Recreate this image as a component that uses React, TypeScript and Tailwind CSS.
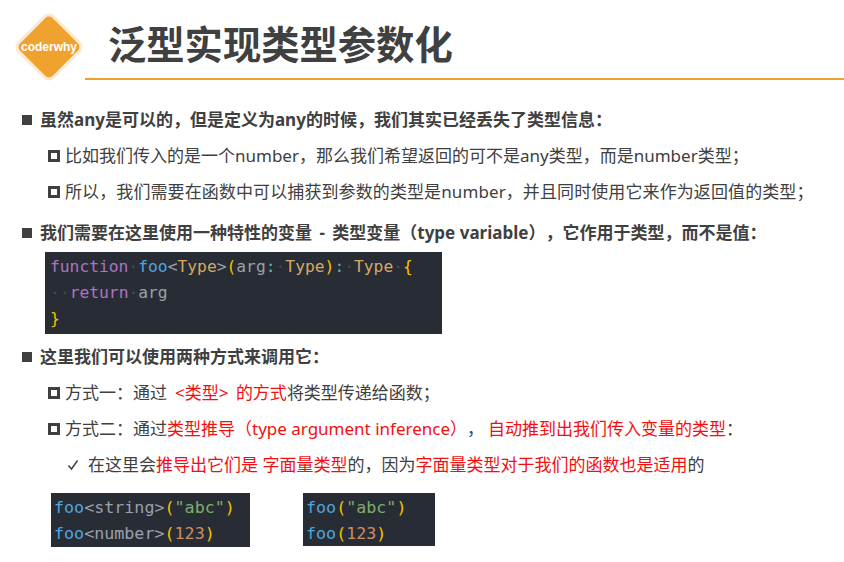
const cjk = 'font-["Noto_Sans","Noto_Sans_CJK_SC",sans-serif]';

function Red({ children }: { children: React.ReactNode }) {
  return <span className="text-[#f30f0f]">{children}</span>;
}

function Main({ children, className = '' }: { children: React.ReactNode; className?: string }) {
  return (
    <div className={`flex h-6 items-center text-[17px] font-bold ${className}`}>
      <span className="ml-[22px] mr-2 h-[10px] w-[10px] shrink-0 bg-[#404040]" />
      <span className="whitespace-pre [text-spacing-trim:space-all]">{children}</span>
    </div>
  );
}

function Sub({ children, className = '' }: { children: React.ReactNode; className?: string }) {
  return (
    <div className={`flex h-6 items-center text-[17px] ${className}`}>
      <span className="ml-[48px] mr-[5px] h-3 w-3 shrink-0 border-[3px] border-[#404040]" />
      <span className="whitespace-pre [text-spacing-trim:space-all]">{children}</span>
    </div>
  );
}

const Dot = () => <span className="text-[#454b57]">·</span>;

function CodeLine({ children }: { children: React.ReactNode }) {
  return <div className="h-[26px] whitespace-pre leading-[26px]">{children}</div>;
}

export default function App() {
  return (
    <div className={`h-[562px] w-[844px] overflow-hidden bg-white text-[#404040] ${cjk}`}>
      {/* header */}
      <div className="relative h-[110px]">
        <div className="absolute left-[15px] top-[13px] h-[68px] w-[68px]">
          <div className="absolute left-[8px] top-[8px] h-[52px] w-[52px] rotate-45 rounded-lg border-[3px] border-[#fbe9d2] bg-[#f0a22e]" />
          <div className='absolute inset-0 flex items-center justify-center font-["Liberation_Sans",sans-serif] text-[12px] font-bold text-white'>
            coderwhy
          </div>
        </div>
        <h1 className="absolute left-[108px] top-[15px] text-[38.3px] leading-[58px] font-bold text-[#404040]">
          泛型实现类型参数化
        </h1>
        <div className="absolute left-[85px] right-0 top-[78px] h-[2px] bg-[#f0a02e]" />
      </div>

      <Main className="mt-[-2px]">虽然any是可以的，但是定义为any的时候，我们其实已经丢失了类型信息：</Main>
      <Sub className="mt-3">比如我们传入的是一个number，那么我们希望返回的可不是any类型，而是number类型；</Sub>
      <Sub className="mt-3 tracking-[0.1px]">所以，我们需要在函数中可以捕获到参数的类型是number，并且同时使用它来作为返回值的类型；</Sub>
      <Main className="mt-[17px]">
        我们需要在这里使用一种特性的变量<span className="mx-[3px]"> - </span>类型变量（type variable），它作用于类型，而不是值：
      </Main>

      <div className='ml-[45px] mt-[7px] h-[82px] w-[397px] bg-[#282c34] px-[5px] py-[2px] font-["DejaVu_Sans_Mono",monospace] text-[16.3px] text-[#9aa0ad]'>
        <CodeLine>
          <span className="text-[#b072c4]">function</span><Dot />
          <span className="text-[#4fa5e0]">foo</span>&lt;<span className="text-[#d8a863]">Type</span>&gt;
          <span className="text-[#f2c400]">(</span>arg<span className="text-[#56b6c2]">:</span><Dot />
          <span className="text-[#d8a863]">Type</span><span className="text-[#f2c400]">)</span>
          <span className="text-[#56b6c2]">:</span><Dot /><span className="text-[#d8a863]">Type</span><Dot />
          <span className="text-[#f2c400]">{'{'}</span>
        </CodeLine>
        <CodeLine>
          <Dot /><Dot /><span className="text-[#b072c4]">return</span><Dot />arg
        </CodeLine>
        <CodeLine>
          <span className="text-[#f2c400]">{'}'}</span>
        </CodeLine>
      </div>

      <Main className="mt-[11px]">这里我们可以使用两种方式来调用它：</Main>
      <Sub className="mt-3">
        方式一：通过<span className="ml-[8px]" /><Red>&lt;类型&gt;<span className="mx-[1.5px]"> </span>的方式</Red>将类型传递给函数；
      </Sub>
      <Sub className="mt-3">
        方式二：通过<Red>类型推导（type argument inference）</Red>，<Red><span className="ml-1" />自动推到出我们传入变量的类型</Red>：
      </Sub>
      <div className="mt-3 flex h-6 items-center text-[17px]">
        <svg className="ml-[67px] mr-[9px] h-3 w-3 shrink-0" viewBox="0 0 12 12" fill="none" stroke="#404040" strokeWidth="1.5">
          <path d="M1.5 6.5 L4.5 10 L10.5 1.5" />
        </svg>
        <span className="whitespace-pre [text-spacing-trim:space-all]">
          在这里会<Red>推导出它们是 字面量类型</Red>的，因为<Red>字面量类型对于我们的函数也是适用</Red>的
        </span>
      </div>

      <div className='mt-4 flex items-start font-["DejaVu_Sans_Mono",monospace] text-[16.7px] text-[#9aa0ad]'>
        <div className="ml-[51px] h-[54px] w-[199px] bg-[#282c34] px-[3px] py-[1px]">
          <CodeLine>
            <span className="text-[#4fa5e0]">foo</span>&lt;string&gt;<span className="text-[#f2c400]">(</span>
            <span className="text-[#7fae6a]">"abc"</span><span className="text-[#f2c400]">)</span>
          </CodeLine>
          <CodeLine>
            <span className="text-[#4fa5e0]">foo</span>&lt;number&gt;<span className="text-[#f2c400]">(</span>
            <span className="text-[#c99066]">123</span><span className="text-[#f2c400]">)</span>
          </CodeLine>
        </div>
        <div className="ml-[53px] h-[53px] w-[132px] bg-[#282c34] px-[3px] py-[1px]">
          <CodeLine>
            <span className="text-[#4fa5e0]">foo</span><span className="text-[#f2c400]">(</span>
            <span className="text-[#7fae6a]">"abc"</span><span className="text-[#f2c400]">)</span>
          </CodeLine>
          <CodeLine>
            <span className="text-[#4fa5e0]">foo</span><span className="text-[#f2c400]">(</span>
            <span className="text-[#c99066]">123</span><span className="text-[#f2c400]">)</span>
          </CodeLine>
        </div>
      </div>
    </div>
  );
}
